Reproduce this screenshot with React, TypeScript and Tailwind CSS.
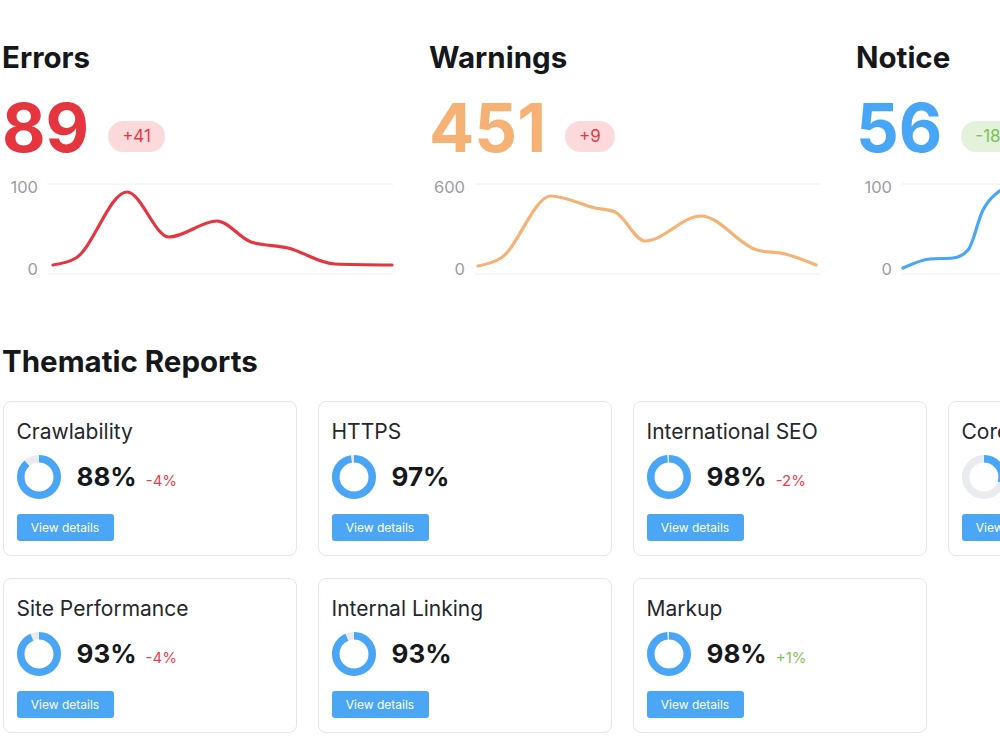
import React from "react";

type Pt = [number, number];

// Monotone-X cubic interpolation (same shape as d3.curveMonotoneX)
function monotonePath(pts: Pt[]): string {
  const n = pts.length;
  const sign = (v: number) => (v < 0 ? -1 : 1);
  const slopes: number[] = new Array(n).fill(0);
  for (let i = 1; i < n - 1; i++) {
    const [x0, y0] = pts[i - 1];
    const [x1, y1] = pts[i];
    const [x2, y2] = pts[i + 1];
    const h0 = x1 - x0;
    const h1 = x2 - x1;
    const s0 = (y1 - y0) / h0;
    const s1 = (y2 - y1) / h1;
    const p = (s0 * h1 + s1 * h0) / (h0 + h1);
    slopes[i] =
      (sign(s0) + sign(s1)) *
        Math.min(Math.abs(s0), Math.abs(s1), 0.5 * Math.abs(p)) || 0;
  }
  if (n > 1) {
    const h0 = pts[1][0] - pts[0][0];
    slopes[0] = (3 * (pts[1][1] - pts[0][1])) / h0 / 2 - slopes[1] / 2;
    const hl = pts[n - 1][0] - pts[n - 2][0];
    slopes[n - 1] =
      (3 * (pts[n - 1][1] - pts[n - 2][1])) / hl / 2 - slopes[n - 2] / 2;
  }
  let d = `M${pts[0][0]},${pts[0][1]}`;
  for (let i = 0; i < n - 1; i++) {
    const [x0, y0] = pts[i];
    const [x1, y1] = pts[i + 1];
    const dx = (x1 - x0) / 3;
    d += ` C${x0 + dx},${y0 + dx * slopes[i]} ${x1 - dx},${y1 - dx * slopes[i + 1]} ${x1},${y1}`;
  }
  return d;
}

type Metric = {
  title: string;
  value: string;
  color: string;
  delta: string;
  deltaBg: string;
  deltaColor: string;
  max: string;
  points: Pt[];
};

const metrics: Metric[] = [
  {
    title: "Errors",
    value: "89",
    color: "#e5363f",
    delta: "+41",
    deltaBg: "#fcdadc",
    deltaColor: "#e23a44",
    max: "100",
    points: [
      [5, 85],
      [28, 78],
      [79, 12],
      [121, 57],
      [169, 41],
      [203, 62],
      [240, 68],
      [287, 84],
      [344, 85],
    ],
  },
  {
    title: "Warnings",
    value: "451",
    color: "#f5b274",
    delta: "+9",
    deltaBg: "#fcdadc",
    deltaColor: "#e23a44",
    max: "600",
    points: [
      [3, 86],
      [26, 78],
      [76, 16],
      [120, 28],
      [140, 32],
      [170, 61],
      [226, 36],
      [282, 70],
      [310, 74],
      [341, 85],
    ],
  },
  {
    title: "Notice",
    value: "56",
    color: "#48a6f6",
    delta: "-18",
    deltaBg: "#e4f2db",
    deltaColor: "#7cc25a",
    max: "100",
    points: [
      [1, 88],
      [28, 79],
      [51, 78],
      [66, 70],
      [81, 30],
      [95, 13],
      [113, 6],
      [150, 10],
      [200, 24],
      [260, 40],
      [344, 60],
    ],
  },
];

function MetricColumn({ m }: { m: Metric }) {
  return (
    <div className="w-[427px] shrink-0">
      <h2 className="text-[29.5px] leading-[34px] font-bold text-[#16171b]">
        {m.title}
      </h2>
      <div className="mt-[21px] flex items-end">
        <span
          className="text-[67px] leading-[66px] font-bold"
          style={{ color: m.color }}
        >
          {m.value}
        </span>
        <span
          className="ml-[19px] mb-[9px] h-[31px] px-[14px] rounded-full flex items-center text-[17px] whitespace-nowrap"
          style={{ backgroundColor: m.deltaBg, color: m.deltaColor }}
        >
          {m.delta}
        </span>
      </div>
      <div className="mt-[19px] flex h-[100px]">
        <div className="w-[36px] h-full flex flex-col justify-between items-end pb-[4px] text-[16.5px] leading-[14px] text-[#9a9ca5]">
          <span>{m.max}</span>
          <span>0</span>
        </div>
        <svg width="345" height="100" className="ml-[10px] overflow-visible">
          <line x1="0" y1="4" x2="345" y2="4" stroke="#eceef1" strokeWidth="1" />
          <line x1="0" y1="94" x2="345" y2="94" stroke="#eceef1" strokeWidth="1" />
          <path
            d={monotonePath(m.points)}
            fill="none"
            stroke={m.color}
            strokeWidth="3.2"
            strokeLinecap="round"
            strokeLinejoin="round"
          />
        </svg>
      </div>
    </div>
  );
}

function Donut({ pct }: { pct: number }) {
  const r = 18.25;
  const c = 2 * Math.PI * r;
  return (
    <svg width="44" height="44" viewBox="0 0 44 44" className="shrink-0">
      <circle cx="22" cy="22" r={r} fill="none" stroke="#e9ebef" strokeWidth="7.5" />
      <circle
        cx="22"
        cy="22"
        r={r}
        fill="none"
        stroke="#49a6f6"
        strokeWidth="7.5"
        strokeDasharray={`${(c * pct) / 100} ${c}`}
        transform="rotate(-90 22 22)"
      />
    </svg>
  );
}

type Report = {
  title: string;
  pct: number;
  delta?: string;
  up?: boolean;
};

const reports: Report[] = [
  { title: "Crawlability", pct: 88, delta: "-4%" },
  { title: "HTTPS", pct: 97 },
  { title: "International SEO", pct: 98, delta: "-2%" },
  { title: "Core Web Vitals", pct: 30 },
  { title: "Site Performance", pct: 93, delta: "-4%" },
  { title: "Internal Linking", pct: 93 },
  { title: "Markup", pct: 98, delta: "+1%", up: true },
];

function ReportCard({ r }: { r: Report }) {
  return (
    <div className="w-[294px] h-[155px] rounded-lg border-[1.5px] border-[#e4e6ea] bg-white pt-4 px-[12.5px]">
      <div className="text-[21px] leading-[28px] text-[#25272c] whitespace-nowrap">
        {r.title}
      </div>
      <div className="mt-[9px] flex items-center">
        <Donut pct={r.pct} />
        <div className="ml-[16px] flex items-baseline">
          <span className="text-[26px] leading-[32px] font-bold text-[#17181c]">
            {r.pct}%
          </span>
          {r.delta && (
            <span
              className={
                r.up
                  ? "ml-[9px] text-[15px] text-[#80c45c]"
                  : "ml-[9px] text-[15px] text-[#e8404a]"
              }
            >
              {r.delta}
            </span>
          )}
        </div>
      </div>
      <button className="mt-[15px] h-[27px] w-[97px] rounded-[3px] bg-[#4ca6f6] text-[12px] text-white flex items-center justify-center">
        View details
      </button>
    </div>
  );
}

export default function App() {
  return (
    <div className="w-[1000px] h-[749px] overflow-hidden bg-white font-['Inter',sans-serif]">
      <div className="w-max pl-[2px] pt-[40px]">
        <div className="flex">
          {metrics.map((m) => (
            <MetricColumn key={m.title} m={m} />
          ))}
        </div>
        <h2 className="mt-[63px] text-[29.5px] leading-[36px] font-bold text-[#16171b]">
          Thematic Reports
        </h2>
        <div className="mt-[22px] ml-[1px] grid grid-cols-[repeat(4,294px)] gap-x-[21px] gap-y-[22px]">
          {reports.map((r) => (
            <ReportCard key={r.title} r={r} />
          ))}
        </div>
      </div>
    </div>
  );
}
